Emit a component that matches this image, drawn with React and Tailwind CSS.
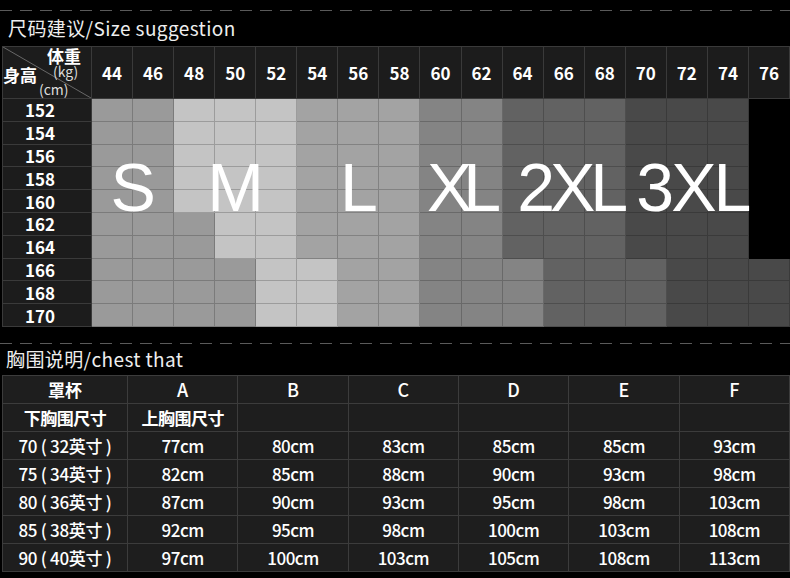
import React from "react";

const weights = [44, 46, 48, 50, 52, 54, 56, 58, 60, 62, 64, 66, 68, 70, 72, 74, 76];
const heights = [152, 154, 156, 158, 160, 162, 164, 166, 168, 170];

const SHADE = {
  S: "bg-[#9a9a9a]",
  M: "bg-[#c4c4c4]",
  L: "bg-[#a3a3a3]",
  XL: "bg-[#848484]",
  X2: "bg-[#626262]",
  X3: "bg-[#494949]",
};

// which size block a cell belongs to (col = weight index, row = height index)
function sizeOf(col, row) {
  const low = row >= 7;
  if (col <= 1) return "S";
  if (col === 2) return row < 5 ? "M" : "S";
  if (col === 3) return low ? "S" : "M";
  if (col === 4) return "M";
  if (col === 5) return low ? "M" : "L";
  if (col <= 7) return "L";
  if (col <= 9) return "XL";
  if (col === 10) return low ? "XL" : "X2";
  if (col <= 12) return "X2";
  if (col === 13) return low ? "X2" : "X3";
  if (col <= 15) return "X3";
  return low ? "X3" : null;
}

const bigLetters = [
  { t: "S", cls: "col-start-2 col-span-2", track: "tracking-normal" },
  { t: "M", cls: "col-start-4 col-span-3", track: "tracking-normal" },
  { t: "L", cls: "col-start-7 col-span-3", track: "tracking-normal" },
  { t: "XL", cls: "col-start-10 col-span-2 pr-[4px]", track: "tracking-[-9px]" },
  { t: "2XL", cls: "col-start-12 col-span-3 pl-[12px]", track: "tracking-[-5px]" },
  { t: "3XL", cls: "col-start-15 col-span-3 pl-[10px]", track: "tracking-[-3px]" },
];

const cups = ["A", "B", "C", "D", "E", "F"];
const chestRows = [
  { label: "70 ( 32英寸 )", v: ["77cm", "80cm", "83cm", "85cm", "85cm", "93cm"] },
  { label: "75 ( 34英寸 )", v: ["82cm", "85cm", "88cm", "90cm", "93cm", "98cm"] },
  { label: "80 ( 36英寸 )", v: ["87cm", "90cm", "93cm", "95cm", "98cm", "103cm"] },
  { label: "85 ( 38英寸 )", v: ["92cm", "95cm", "98cm", "100cm", "103cm", "108cm"] },
  { label: "90 ( 40英寸 )", v: ["97cm", "100cm", "103cm", "105cm", "108cm", "113cm"] },
];

function Dashes() {
  return <div className="h-px w-full bg-[repeating-linear-gradient(90deg,#5a5a5a_0_12px,transparent_12px_20px)]" />;
}

export default function App() {
  return (
    <div className="w-[790px] h-[578px] bg-black overflow-hidden flex flex-col text-white font-['Noto_Sans_CJK_SC','Noto_Sans',sans-serif]">
      <div className="h-[10px] shrink-0" />
      <Dashes />
      <div className="h-[35px] shrink-0 flex items-center pl-[8px] text-[19px] tracking-[0.4px] text-[#eeeeee]">
        尺码建议/Size suggestion
      </div>

      {/* size grid */}
      <div className="relative ml-[2px] w-[788px] shrink-0 grid grid-cols-[90px_repeat(17,1fr)] grid-rows-[53px_repeat(10,22.8px)]">
        <div className="relative bg-[#1c1c1c] border-t border-l border-r border-b border-[#3a3a3a]">
          <svg className="absolute inset-0" width="100%" height="100%" viewBox="0 0 90 53" preserveAspectRatio="none">
            <line x1="0" y1="0" x2="90" y2="53" stroke="#6a6a6a" strokeWidth="1" />
          </svg>
          <span className="absolute left-[44px] top-[1px] text-[17px] font-bold leading-[16px]">体重</span>
          <span className="absolute left-[50px] top-[17px] text-[14px] leading-[15px] text-[#dddddd]">(kg)</span>
          <span className="absolute left-[0px] top-[20px] text-[17px] font-bold leading-[16px]">身高</span>
          <span className="absolute left-[36px] top-[35px] text-[14px] leading-[15px] text-[#dddddd]">(cm)</span>
        </div>
        {weights.map((w) => (
          <div
            key={w}
            className="bg-[#1c1c1c] border-t border-r border-b border-[#3a3a3a] flex items-center justify-center text-[17px] font-bold"
          >
            {w}
          </div>
        ))}
        {heights.map((h, r) => (
          <React.Fragment key={h}>
            <div className="bg-[#1c1c1c] border-l border-r border-b border-[#3a3a3a] flex items-center justify-center pr-[14px] text-[17px] font-bold leading-none">
              {h}
            </div>
            {weights.map((w, c) => {
              const s = sizeOf(c, r);
              return s ? (
                <div key={w} className={`${SHADE[s]} border-r border-b border-black/20`} />
              ) : (
                <div key={w} className="bg-black" />
              );
            })}
          </React.Fragment>
        ))}

        <div className="absolute left-0 right-0 top-[107px] grid grid-cols-[90px_repeat(17,1fr)] pointer-events-none font-['Liberation_Sans',Arial,sans-serif]">
          {bigLetters.map((l) => (
            <div key={l.t} className={`${l.cls} ${l.track} text-center text-[68px] leading-[68px] text-white`}>
              {l.t}
            </div>
          ))}
        </div>
      </div>

      <div className="h-[16px] shrink-0" />
      <Dashes />
      <div className="h-[31px] shrink-0 flex items-center pl-[6px] text-[19px] tracking-[0.4px] text-[#eeeeee]">
        胸围说明/chest that
      </div>

      {/* chest table */}
      <div className="ml-[2px] w-[788px] shrink-0 grid grid-cols-[125px_repeat(6,1fr)] grid-rows-[repeat(7,28px)] border-t border-l border-[#3c3c3c] text-[17px] font-medium">
        <div className="bg-[#1e1e1e] border-r border-b border-[#3c3c3c] flex items-center justify-center font-bold">罩杯</div>
        {cups.map((c) => (
          <div key={c} className="bg-[#1e1e1e] border-r border-b border-[#3c3c3c] flex items-center justify-center text-[18px]">
            {c}
          </div>
        ))}
        <div className="bg-[#1e1e1e] border-r border-b border-[#3c3c3c] flex items-center justify-center font-bold tracking-[-0.5px]">下胸围尺寸</div>
        <div className="bg-[#1e1e1e] border-r border-b border-[#3c3c3c] flex items-center justify-center font-bold tracking-[-0.5px]">上胸围尺寸</div>
        {cups.slice(1).map((c) => (
          <div key={c} className="bg-[#1e1e1e] border-r border-b border-[#3c3c3c]" />
        ))}
        {chestRows.map((row) => (
          <React.Fragment key={row.label}>
            <div className="bg-[#1e1e1e] border-r border-b border-[#3c3c3c] flex items-center justify-center tracking-[-0.3px] whitespace-pre">
              {row.label}
            </div>
            {row.v.map((v, i) => (
              <div key={i} className="bg-[#1e1e1e] border-r border-b border-[#3c3c3c] flex items-center justify-center tracking-[-0.5px]">
                {v}
              </div>
            ))}
          </React.Fragment>
        ))}
      </div>
    </div>
  );
}
